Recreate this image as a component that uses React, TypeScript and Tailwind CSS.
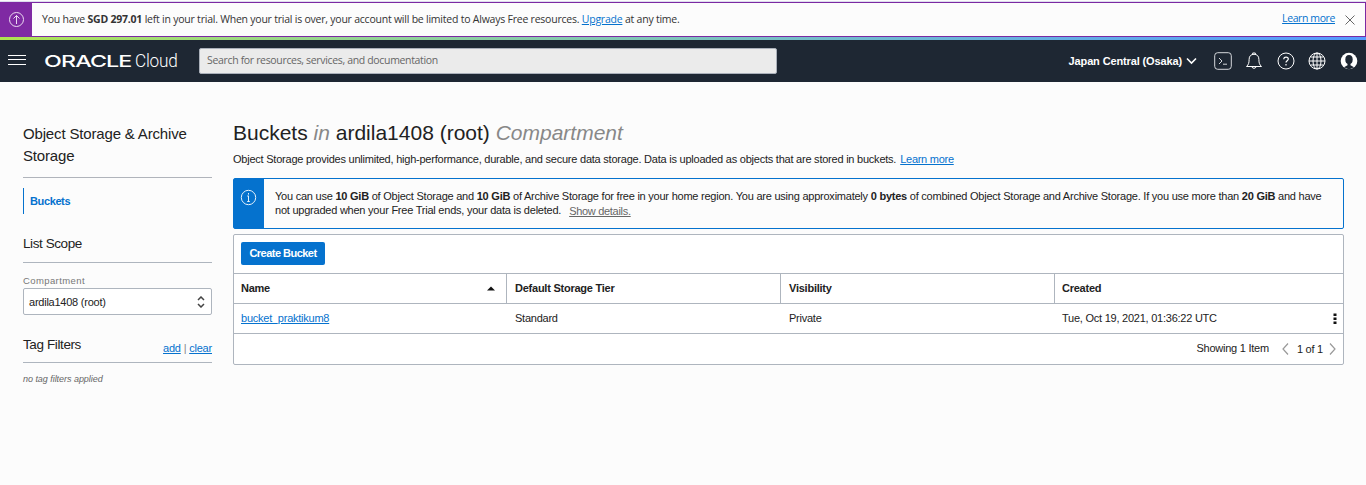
import type { ReactNode } from "react";

const SEGOE = "font-['Open_Sans','Noto_Sans',sans-serif]";

function Icon({ className = "", size = 18, children }: { className?: string; size?: number; children: ReactNode }) {
  return (
    <svg className={`block shrink-0 ${className}`} width={size} height={size} viewBox={`0 0 ${size} ${size}`} fill="none" stroke="currentColor">
      {children}
    </svg>
  );
}

function TrialBanner() {
  return (
    <div className={`${SEGOE} flex h-[35px] border border-l-0 border-[#7b29a2] bg-[#fcfcfc] text-[#333]`}>
      <div className="-my-px flex w-8 items-center justify-center bg-[#7f2aa3] text-[#ecdcf2]">
        <Icon size={17}>
          <circle cx="8.5" cy="8.5" r="7" />
          <path d="M8.5 13V4.5M5.5 7.5l3-3 3 3" />
        </Icon>
      </div>
      <p className="ml-[10px] flex-1 text-[10.5px] leading-[32px] tracking-[-0.225px]">
        You have <b>SGD 297.01</b> left in your trial. When your trial is over, your account will be limited to Always Free resources.{" "}
        <a className="text-[#0572ce] underline">Upgrade</a> at any time.
      </p>
      <a className="mr-[9px] text-[10.5px] leading-[30px] tracking-[-0.4px] text-[#0572ce] underline">Learn more</a>
      <Icon size={12} className="mt-[11px] mr-[9px] text-[#666]">
        <path d="M1.500 1.500l9 9M10.500 1.500l-9 9" />
      </Icon>
    </div>
  );
}

function Header() {
  return (
    <header className="flex h-[42px] items-center bg-[#1e2733] text-white">
      <svg className="ml-2 block" width="18" height="12" viewBox="0 0 18 12" fill="white">
        <rect y="0" width="18" height="1" />
        <rect y="4" width="18" height="1" />
        <rect y="9" width="18" height="1" />
      </svg>
      <svg className="ml-[18px] block" width="136" height="24" viewBox="0 0 136 24" fill="white">
        <text x="0" y="18" textLength="87.500" lengthAdjust="spacingAndGlyphs" letterSpacing="-0.6" fontSize="16" fontWeight="500" fontFamily="Inter, sans-serif">ORACLE</text>
        <text x="91" y="18" textLength="42.500" lengthAdjust="spacingAndGlyphs" fontSize="17.500" fontWeight="300" fontFamily="Roboto, sans-serif">Cloud</text>
      </svg>
      <div className="ml-[19px] flex h-[26px] w-[578px] items-center rounded-[2px] border border-[#aab0ba] bg-[#ebebeb] pl-[7px]">
        <span className={`${SEGOE} text-[10.5px] tracking-[-0.335px] text-[#666]`}>Search for resources, services, and documentation</span>
      </div>
      <div className="ml-auto flex items-center">
        <b className="text-[11px] tracking-[-0.13px]">Japan Central (Osaka)</b>
        <svg className="ml-[4px] block" width="11" height="8" viewBox="0 0 11 8" fill="none" stroke="white" strokeWidth="1.6">
          <path d="M1 1.5l4.5 4.5L10 1.5" />
        </svg>
        <Icon className="ml-[17px] text-[#d5d8dc]">
          <rect x="0.7" y="0.7" width="16.6" height="16.6" rx="3" />
          <path d="M5 6l3 3-3 3M9 12.2h4" />
        </Icon>
        <Icon className="ml-[13px]">
          <path d="M1.5 14.5h15c-2-1.8-2.6-3.5-2.6-7C13.9 4 12 2.3 9 2.3S4.1 4 4.1 7.5c0 3.500-.6 5.200-2.600 7zM7.700 2V1h2.600v1M7 15c.3 1.700 3.700 1.700 4 0" />
        </Icon>
        <Icon className="ml-[14px]">
          <circle cx="9" cy="9" r="8" />
          <path d="M6.800 7.200c0-3 4.500-2.700 4.500-.2 0 1.700-2.300 1.700-2.300 3.500M9 12v1.500" strokeWidth="1.200" />
        </Icon>
        <Icon className="ml-[13px]">
          <circle cx="9" cy="9" r="8" />
          <ellipse cx="9" cy="9" rx="4" ry="8" />
          <path d="M9 1v16M1 9h16M2.500 5h13M2.500 13h13" />
        </Icon>
        <Icon className="ml-[14px] mr-2">
          <circle cx="9" cy="9" r="8.300" fill="white" stroke="none" />
          <ellipse cx="9" cy="7.500" rx="3.700" ry="4.500" fill="#1e2733" stroke="none" />
          <path d="M7.500 11h3v2.200l3.500 2-5 2.300-5-2.300 3.500-2z" fill="#1e2733" stroke="none" />
        </Icon>
      </div>
    </header>
  );
}

function Sidebar() {
  return (
    <aside className="w-[189px] shrink-0">
      <h2 className="border-b border-[#b0b4bb] pt-[41px] pb-[10px] text-[15px] leading-[22px] tracking-[-0.16px]">
        Object Storage &amp; Archive Storage
      </h2>
      <div className="mt-[10px] h-[26px] border-l border-[#0572ce] pl-[6px] leading-[27px] font-bold tracking-[-0.38px] text-[#0572ce]">
        Buckets
      </div>
      <h3 className="h-[49px] border-b border-[#aeb5be] pt-[19px] text-[13.5px] leading-[22px] tracking-[-0.42px]">
        List Scope
      </h3>
      <div className="mt-[12px] h-[13px] text-[9.5px] leading-[12px] tracking-[0.4px] text-[#777]">
        Compartment
      </div>
      <div className="flex h-[27px] items-center justify-between rounded-[2px] border border-[#aeb5be] bg-white pr-[6px] pl-[5px]">
        <span className="pt-px">ardila1408 (root)</span>
        <svg width="8" height="12" viewBox="0 0 8 12" fill="none" stroke="#444" strokeWidth="1.5">
          <path d="M1 4l3-3 3 3M1 8l3 3 3-3" />
        </svg>
      </div>
      <div className="flex h-[48px] justify-between border-b border-[#aeb5be] pt-[18px]">
        <h3 className="text-[13.5px] leading-[23px] tracking-[-0.39px]">Tag Filters</h3>
        <div className="pt-[4px] leading-[22px] tracking-[-0.2px] text-[#888]">
          <a className="text-[#0572ce] underline">add</a> | <a className="text-[#0572ce] underline">clear</a>
        </div>
      </div>
      <p className="pt-[9px] text-[9px] leading-[14px] tracking-[-0.04px] text-[#666] italic">no tag filters applied</p>
    </aside>
  );
}

const COLS = "grid grid-cols-[273px_274px_274px_1fr]";

function Main() {
  return (
    <main className="ml-[21px] w-[1111px]">
      <h1 className="pt-[38px] text-[21px] leading-[26px] tracking-normal">
        Buckets <i className="text-[#888]">in</i> ardila1408 (root) <i className="text-[#888]">Compartment</i>
      </h1>
      <p className="pt-[5px] leading-[16px] tracking-[-0.23px]">
        Object Storage provides unlimited, high-performance, durable, and secure data storage. Data is uploaded as objects that are stored in buckets.
        <a className="ml-[4px] tracking-[-0.27px] text-[#0572ce] underline">Learn more</a>
      </p>
      <section className="mt-[11px] flex h-[51px] rounded-[2px] border border-[#0572ce] bg-[#fcfcfc]">
        <div className="flex w-[30px] shrink-0 justify-center bg-[#0572ce] pt-[10px] pr-[2px] text-[#e6f1fa]">
          <Icon size={17}>
            <circle cx="8.5" cy="8.5" r="7.2" />
            <path d="M8.5 4v1.600M8.500 6.800v5.700M7.200 12.500h2.600M7.200 7h1.300" />
          </Icon>
        </div>
        <div className="pt-[10px] pl-[11px] leading-[14px] tracking-[-0.231px] whitespace-nowrap">
          <p>You can use <b>10 GiB</b> of Object Storage and <b>10 GiB</b> of Archive Storage for free in your home region. You are using approximately <b>0 bytes</b> of combined Object Storage and Archive Storage. If you use more than <b>20 GiB</b> and have</p>
          <p>
            not upgraded when your Free Trial ends, your data is deleted.
            <a className="relative top-px ml-[8px] tracking-[-0.3px] text-[#666] underline">Show details.</a>
          </p>
        </div>
      </section>
      <section className="mt-[5px] rounded-[2px] border border-[#aeb5be] bg-white">
        <div className="h-[38px] pt-[7px] pl-[7px]">
          <button className="flex h-[23px] w-[84px] items-center justify-center rounded-[2px] bg-[#0572ce] font-bold tracking-[-0.52px] text-white">Create Bucket</button>
        </div>
        <div className={`${COLS} h-[31px] border-y border-[#aeb5be] leading-[29px] font-bold`}>
          <div className="flex items-center justify-between border-r border-[#aeb5be] pr-[11px] pl-[7px]">
            <span>Name</span>
            <svg width="8" height="5" viewBox="0 0 8 5" fill="#111"><path d="M4 0.500L8 4.500H0z" /></svg>
          </div>
          <div className="border-r border-[#aeb5be] pl-[8px]">Default Storage Tier</div>
          <div className="border-r border-[#aeb5be] pl-[8px]">Visibility</div>
          <div className="pl-[7px]">Created</div>
        </div>
        <div className={`${COLS} h-[30px] border-b border-[#aeb5be] leading-[29px]`}>
          <div className="pl-[7px]"><a className="text-[#0572ce] underline">bucket_praktikum8</a></div>
          <div className="pl-[8px]">Standard</div>
          <div className="pl-[8px]">Private</div>
          <div className="flex items-center justify-between pr-[6px] pl-[7px]">
            <span>Tue, Oct 19, 2021, 01:36:22 UTC</span>
            <svg width="4" height="12" viewBox="0 0 4 12" fill="#111"><path d="M0.500 0.500h3v2.500h-3zM0.500 4.500h3v2.500h-3zM0.500 8.500h3v2.500h-3z" /></svg>
          </div>
        </div>
        <div className="flex h-[30px] items-center justify-end pr-[7px]">
          <span className="pb-px">Showing 1 Item</span>
          <svg className="ml-[13px]" width="7" height="12" viewBox="0 0 7 12" fill="none" stroke="#999" strokeWidth="1.200"><path d="M6 0.500L1 6l5 5.500" /></svg>
          <span className="mr-[6px] ml-[8px]">1 of 1</span>
          <svg width="7" height="12" viewBox="0 0 7 12" fill="none" stroke="#999" strokeWidth="1.200"><path d="M1 0.500L6 6l-5 5.500" /></svg>
        </div>
      </section>
    </main>
  );
}

export default function App() {
  return (
    <div className="h-[485px] overflow-hidden bg-[#fcfcfc] font-['Liberation_Sans',Arial,sans-serif] text-[11px] tracking-[-0.24px] text-[#222]">
      <div className="h-[2px] border-b border-[#dde]" />
      <TrialBanner />
      <div className="h-[3px] bg-linear-to-r from-[#aee350] to-[#5599ff]" />
      <Header />
      <div className="flex pl-[23px]">
        <Sidebar />
        <Main />
      </div>
    </div>
  );
}
